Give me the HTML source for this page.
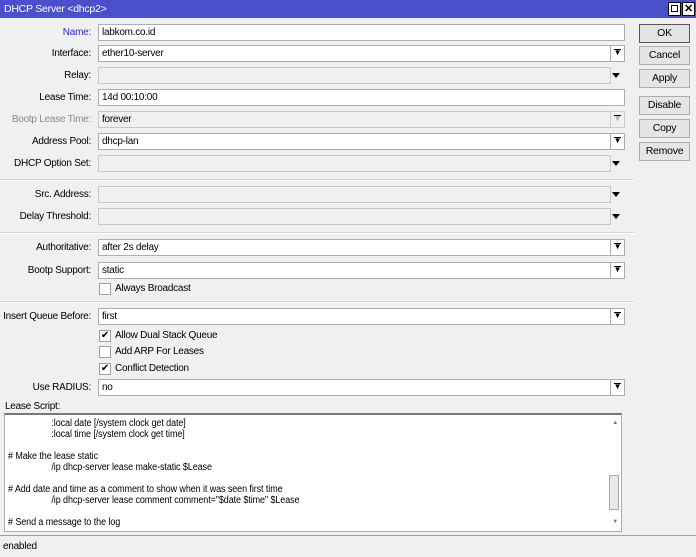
<!DOCTYPE html><html><head><style>
body{margin:0;width:696px;height:557px;background:#f0f0f0;font-family:"Liberation Sans",sans-serif;font-size:10px;letter-spacing:-0.25px;color:#000;position:relative;overflow:hidden}
.a{position:absolute}
.t{left:0;top:0;width:696px;height:18px;background:#4b4fcb;color:#fff;line-height:18px;font-size:10.5px}
.l{right:605px;text-align:right;height:17px;line-height:17px;white-space:nowrap}
.f{left:98px;width:508px;height:15px;border:1px solid #abadb3;background:#fff;line-height:15px;padding-left:3px;box-sizing:content-box}
.f.d{background:#f0f0f0;border-color:#c8c8c8}
.db{left:610px;width:13px;height:15px;border:1px solid #adadad;background:#fff;font-size:8px;text-align:center;line-height:13px}
.db:after{content:"";position:absolute;left:3px;top:3px;width:7px;height:1px;background:#000}
.ar{left:612px;width:0;height:0;border-left:4px solid transparent;border-right:4px solid transparent;border-top:5px solid #000}
.sep{left:0;width:634px;height:1px;background:#d5d5d5;border-bottom:1px solid #fff}
.b{left:639px;width:49px;height:17px;border:1px solid #adadad;background:#e5e5e5;text-align:center;line-height:17px;font-size:10.5px}
.cb{left:99px;width:10px;height:10px;border:1px solid #a0a0a0;background:#fff;font-size:10px;line-height:10px;text-align:center}
.ct{left:115px;line-height:12px}
.sc{position:absolute;left:3px;top:3px;white-space:pre;font-size:10px;letter-spacing:-0.1px;transform:scaleX(0.9);transform-origin:0 0}
</style></head><body>
<div class="a t"><span style="padding-left:4px">DHCP Server &lt;dhcp2&gt;</span></div>
<div class="a" style="left:668px;top:2px;width:11px;height:12px;border:1px solid #000;background:#fff"><div style="margin:2px;width:5px;height:5px;border:1px solid #000"></div></div>
<div class="a" style="left:682px;top:2px;width:11px;height:12px;border:1px solid #000;background:#fff;font-size:11px;line-height:12px;text-align:center;font-weight:bold">✕</div>

<div class="a l" style="top:24px;color:#2a2ad0">Name:</div><div class="a f" style="top:24px;width:522px">labkom.co.id</div>
<div class="a l" style="top:45px">Interface:</div><div class="a f" style="top:45px">ether10-server</div><div class="a db" style="top:45px">▼</div>
<div class="a l" style="top:67px">Relay:</div><div class="a f d" style="top:67px"></div><div class="a ar" style="top:73px"></div>
<div class="a l" style="top:89px">Lease Time:</div><div class="a f" style="top:89px;width:522px">14d 00:10:00</div>
<div class="a l" style="top:111px;color:#8a8a8a">Bootp Lease Time:</div><div class="a f d" style="top:111px">forever</div><div class="a db" style="top:111px;color:#aaa;background:#f0f0f0;border-color:#ccc">▼</div>
<div class="a l" style="top:133px">Address Pool:</div><div class="a f" style="top:133px">dhcp-lan</div><div class="a db" style="top:133px">▼</div>
<div class="a l" style="top:155px">DHCP Option Set:</div><div class="a f d" style="top:155px"></div><div class="a ar" style="top:161px"></div>
<div class="a sep" style="top:179px"></div>
<div class="a l" style="top:186px">Src. Address:</div><div class="a f d" style="top:186px"></div><div class="a ar" style="top:192px"></div>
<div class="a l" style="top:208px">Delay Threshold:</div><div class="a f d" style="top:208px"></div><div class="a ar" style="top:214px"></div>
<div class="a sep" style="top:232px"></div>
<div class="a l" style="top:239px">Authoritative:</div><div class="a f" style="top:239px">after 2s delay</div><div class="a db" style="top:239px">▼</div>
<div class="a l" style="top:262px">Bootp Support:</div><div class="a f" style="top:262px">static</div><div class="a db" style="top:262px">▼</div>
<div class="a cb" style="top:283px"></div><div class="a ct" style="top:283px">Always Broadcast</div>
<div class="a sep" style="top:301px"></div>
<div class="a l" style="top:308px">Insert Queue Before:</div><div class="a f" style="top:308px">first</div><div class="a db" style="top:308px">▼</div>
<div class="a cb" style="top:330px">✔</div><div class="a ct" style="top:330px">Allow Dual Stack Queue</div>
<div class="a cb" style="top:346px"></div><div class="a ct" style="top:346px">Add ARP For Leases</div>
<div class="a cb" style="top:363px">✔</div><div class="a ct" style="top:363px">Conflict Detection</div>
<div class="a l" style="top:379px">Use RADIUS:</div><div class="a f" style="top:379px">no</div><div class="a db" style="top:379px">▼</div>
<div class="a" style="left:5px;top:401px">Lease Script:</div>
<div class="a" style="left:4px;top:413px;width:616px;height:116px;border:1px solid #abadb3;border-top:2px solid #777;background:#fff;line-height:11px;overflow:hidden">
<div class="sc">                  :local date [/system clock get date]
                  :local time [/system clock get time]

# Make the lease static
                  /ip dhcp-server lease make-static $Lease

# Add date and time as a comment to show when it was seen first time
                  /ip dhcp-server lease comment comment="$date $time" $Lease

# Send a message to the log</div>
<div style="position:absolute;right:0;top:0;width:14px;height:116px;background:#fff"></div>
<div style="position:absolute;right:3px;top:3px;font-size:6px;color:#777">▲</div>
<div style="position:absolute;right:3px;bottom:3px;font-size:6px;color:#777">▼</div>
<div style="position:absolute;right:2px;top:60px;width:8px;height:33px;border:1px solid #aaa;background:#e8e8e8"></div>
</div>
<div class="a" style="left:0;top:535px;width:696px;height:1px;background:#a0a0a0"></div>
<div class="a" style="left:3px;top:541px">enabled</div>

<div class="a b" style="top:24px;border-color:#555">OK</div>
<div class="a b" style="top:46px">Cancel</div>
<div class="a b" style="top:69px">Apply</div>
<div class="a b" style="top:96px">Disable</div>
<div class="a b" style="top:119px">Copy</div>
<div class="a b" style="top:142px">Remove</div>
</body></html>
